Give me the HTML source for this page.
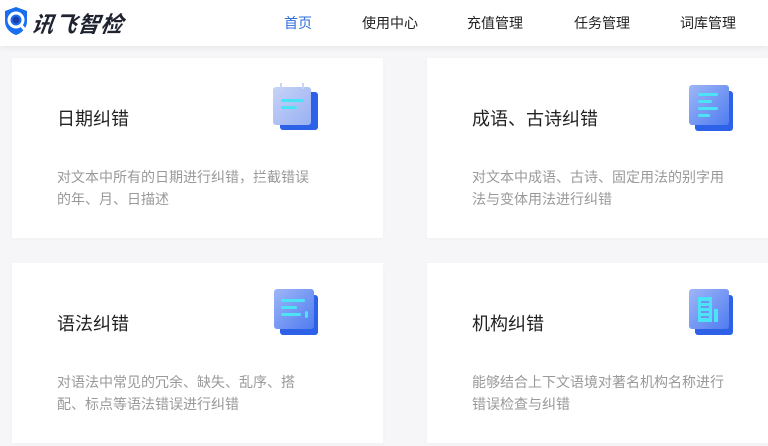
<!DOCTYPE html>
<html><head><meta charset="utf-8"><style>
*{margin:0;padding:0;box-sizing:border-box}
body{width:768px;height:446px;overflow:hidden;background:#f6f6f8;font-family:"Liberation Sans","Noto Sans CJK SC",sans-serif;position:relative}
.hd{position:absolute;left:0;top:0;width:768px;height:46px;background:#fff;box-shadow:0 2px 6px rgba(0,0,0,0.06)}
.logo{position:absolute;left:32px;top:7px;font-size:22px;font-weight:bold;font-style:italic;color:#1f2330;letter-spacing:1px;transform:skewX(-8deg)}
.nav{position:absolute;top:13px;font-size:14px;color:#222}
.card{position:absolute;background:#fff;box-shadow:0 1px 4px rgba(0,0,0,0.03)}
.t{position:absolute;left:45px;top:47px;font-size:18px;color:#222}
.d{position:absolute;left:45px;top:108px;font-size:14px;line-height:22px;color:#999;width:260px}
.ic{position:absolute;width:48px;height:48px}
</style></head><body>
<div class="hd">
<svg style="position:absolute;left:3px;top:6px" width="26" height="30" viewBox="0 0 26 30"><path d="M13 1 L24 5 V15 C24 22 19 27 13 29 C7 27 2 22 2 15 V5 Z" fill="#1a6ef0"/><circle cx="13" cy="14" r="7" fill="none" stroke="#fff" stroke-width="3"/><circle cx="13" cy="14" r="3.5" fill="#1d3fa8"/><path d="M17 18 L22 24" stroke="#fff" stroke-width="3"/></svg>
<div class="logo">讯飞智检</div>
<div class="nav" style="left:284px;color:#2f6ddf">首页</div>
<div class="nav" style="left:362px">使用中心</div>
<div class="nav" style="left:467px">充值管理</div>
<div class="nav" style="left:574px">任务管理</div>
<div class="nav" style="left:680px">词库管理</div>
</div>
<svg width="0" height="0" style="position:absolute"><defs><linearGradient id="g" x1="0" y1="0" x2="1" y2="1"><stop offset="0" stop-color="#9fb6f7"/><stop offset="1" stop-color="#4f7cf0"/></linearGradient><linearGradient id="g2" x1="0" y1="0" x2="1" y2="1"><stop offset="0" stop-color="#c7d3f7"/><stop offset="1" stop-color="#98b0f3"/></linearGradient></defs></svg>

<div class="card" style="left:12px;top:58px;width:371px;height:180px">
<div class="t">日期纠错</div>
<div class="d">对文本中所有的日期进行纠错，拦截错误的年、月、日描述</div>
<svg class="ic" style="left:258px;top:24px" viewBox="0 0 48 48"><rect x="10" y="10" width="38" height="38" rx="3" fill="#2d62e8"/><rect x="3" y="5" width="38" height="38" rx="3" fill="url(#g2)"/><rect x="10" y="1" width="2" height="6" fill="#c9d4f7"/><rect x="32" y="1" width="2" height="6" fill="#c9d4f7"/><rect x="11" y="17" width="23" height="3" rx="1.5" fill="#4ce3f7"/><rect x="11" y="24" width="16" height="3" rx="1.5" fill="#4ce3f7"/></svg>
</div>
<div class="card" style="left:427px;top:58px;width:341px;height:180px">
<div class="t">成语、古诗纠错</div>
<div class="d">对文本中成语、古诗、固定用法的别字用法与变体用法进行纠错</div>
<svg class="ic" style="left:260px;top:25px" viewBox="0 0 48 48"><rect x="8" y="8" width="38" height="40" rx="3" fill="#2d62e8"/><rect x="2" y="2" width="40" height="40" rx="3" fill="url(#g)"/><rect x="11" y="10" width="20" height="3" rx="1.5" fill="#4ce3f7"/><rect x="11" y="17" width="14" height="3" rx="1.5" fill="#4ce3f7"/><rect x="11" y="24" width="20" height="3" rx="1.5" fill="#4ce3f7"/><rect x="11" y="31" width="12" height="3" rx="1.5" fill="#4ce3f7"/></svg>
</div>
<div class="card" style="left:12px;top:263px;width:371px;height:180px">
<div class="t">语法纠错</div>
<div class="d">对语法中常见的冗余、缺失、乱序、搭配、标点等语法错误进行纠错</div>
<svg class="ic" style="left:260px;top:24px" viewBox="0 0 48 48"><rect x="8" y="8" width="38" height="40" rx="3" fill="#2d62e8"/><rect x="2" y="2" width="40" height="40" rx="3" fill="url(#g)"/><rect x="9" y="12" width="24" height="3" rx="1.5" fill="#4ce3f7"/><rect x="9" y="19" width="16" height="3" rx="1.5" fill="#4ce3f7"/><rect x="9" y="26" width="20" height="3" rx="1.5" fill="#4ce3f7"/><rect x="33" y="24" width="3" height="7" rx="1.5" fill="#4ce3f7"/></svg>
</div>
<div class="card" style="left:427px;top:263px;width:341px;height:180px">
<div class="t">机构纠错</div>
<div class="d">能够结合上下文语境对著名机构名称进行错误检查与纠错</div>
<svg class="ic" style="left:260px;top:24px" viewBox="0 0 48 48"><rect x="8" y="8" width="38" height="40" rx="3" fill="#2d62e8"/><rect x="2" y="2" width="40" height="40" rx="3" fill="url(#g)"/><rect x="11" y="10" width="14" height="25" fill="#4ce3f7"/><rect x="14" y="14" width="8" height="2" fill="#6e93f3"/><rect x="14" y="19" width="8" height="2" fill="#6e93f3"/><rect x="14" y="24" width="8" height="2" fill="#6e93f3"/><rect x="14" y="29" width="8" height="2" fill="#6e93f3"/><rect x="27" y="22" width="4" height="13" fill="#4ce3f7"/></svg>
</div>
</body></html>
